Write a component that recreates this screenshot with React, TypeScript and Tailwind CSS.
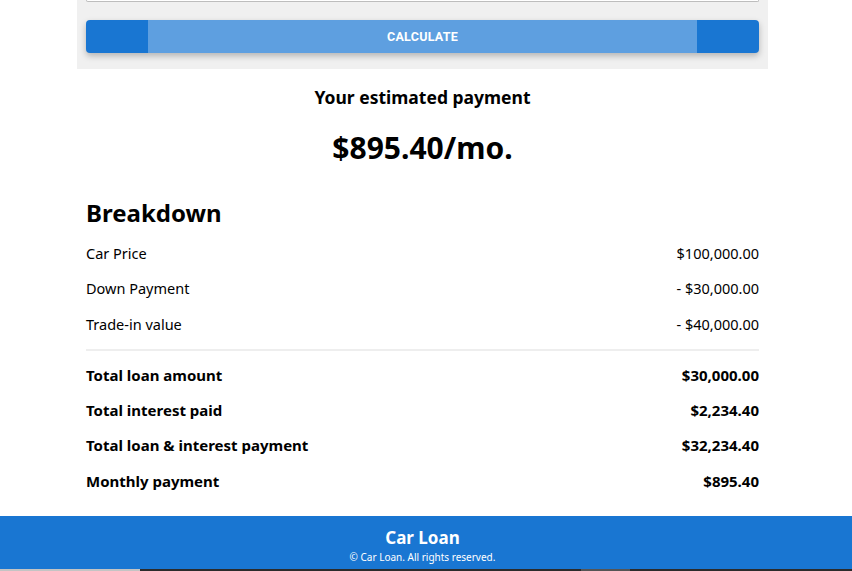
const font = { fontFamily: '"Noto Sans", "Open Sans", sans-serif' };

const items = [
  { label: 'Car Price', value: '$100,000.00' },
  { label: 'Down Payment', value: '- $30,000.00' },
  { label: 'Trade-in value', value: '- $40,000.00' },
];

const totals = [
  { label: 'Total loan amount', value: '$30,000.00' },
  { label: 'Total interest paid', value: '$2,234.40' },
  { label: 'Total loan & interest payment', value: '$32,234.40' },
  { label: 'Monthly payment', value: '$895.40' },
];

export default function App() {
  return (
    <div className="w-[852px] h-[571px] bg-white overflow-hidden flex flex-col" style={font}>
      <div className="ml-[77px] w-[691px] h-[69px] bg-[#f0f0f0] px-[9px] shrink-0">
        <div className="h-[2px] border-b border-x border-[#bdbdbd] bg-white rounded-b" />
        <div className="mt-[18px] h-[33px] rounded bg-[#1976d2] shadow-[0_3px_6px_rgba(0,0,0,0.25)] flex overflow-hidden">
          <div className="ml-[62px] w-[549px] bg-[#5e9fe0] flex items-center justify-center pt-[2px]">
            <span className="text-white text-[12.5px] font-bold tracking-[0.02em]" style={{ fontFamily: 'Roboto, sans-serif' }}>
              CALCULATE
            </span>
          </div>
        </div>
      </div>

      <div className="ml-[86px] w-[673px] flex flex-col text-black">
        <div className="mt-[16px] text-center text-[17.5px] font-bold leading-[24px]">Your estimated payment</div>
        <div className="mt-[20px] text-center text-[30px] font-bold leading-[38px]">$895.40/mo.</div>

        <h2 className="mt-[31px] text-[24px] font-bold leading-[30px]">Breakdown</h2>

        <div className="mt-[8px] flex flex-col">
          {items.map(r => (
            <div key={r.label} className="flex justify-between h-[35.5px] items-center text-[14.5px]">
              <span>{r.label}</span>
              <span>{r.value}</span>
            </div>
          ))}
        </div>

        <div className="mt-[6px] h-[2px] bg-[#eeeeee]" />

        <div className="mt-[7px] flex flex-col">
          {totals.map(r => (
            <div key={r.label} className="flex justify-between h-[35.3px] items-center text-[15px] font-bold">
              <span>{r.label}</span>
              <span>{r.value}</span>
            </div>
          ))}
        </div>
      </div>

      <div className="mt-auto h-[53px] bg-[#1976d2] text-white flex flex-col items-center pt-[12px] pr-[7px]">
        <div className="text-[17px] font-bold leading-[20px]">Car Loan</div>
        <div className="text-[10px] leading-[14px] mt-[2px]">© Car Loan. All rights reserved.</div>
      </div>
      <div className="h-[2px] flex shrink-0">
        <div className="w-[140px] bg-[#c4c4c4]" />
        <div className="w-[441px] bg-[#2b2b2b]" />
        <div className="w-[49px] bg-[#555555]" />
        <div className="flex-1 bg-[#2b2b2b]" />
      </div>
    </div>
  );
}
